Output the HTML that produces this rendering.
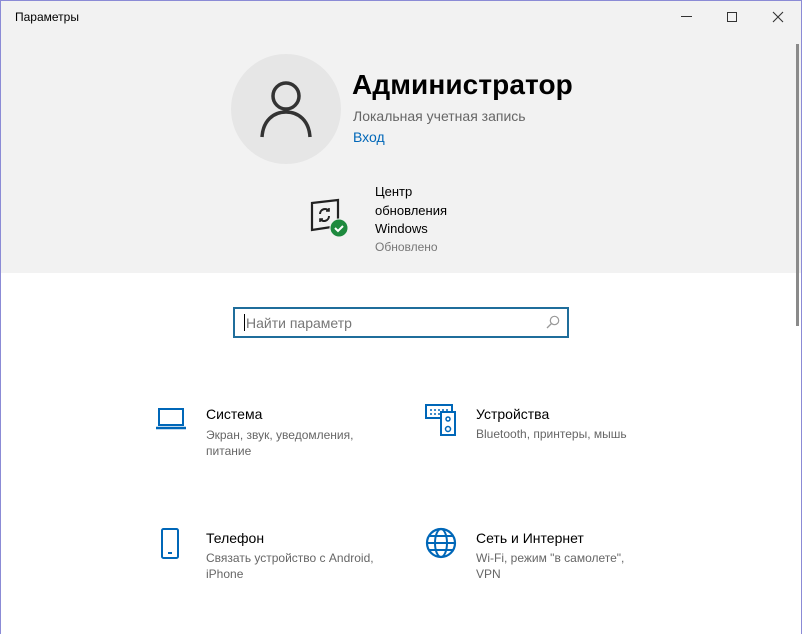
<!DOCTYPE html>
<html><head><meta charset="utf-8"><style>
*{margin:0;padding:0;box-sizing:border-box}
body{width:802px;height:634px;overflow:hidden;font-family:"Liberation Sans","DejaVu Sans",sans-serif;background:#fff;position:relative}
.win{position:absolute;left:0;top:0;width:802px;height:634px;border:1px solid #8b8bd6;border-bottom:none}
.head{position:absolute;left:1px;top:1px;width:800px;height:272px;background:#f2f2f2}
.t{position:absolute;white-space:nowrap}
.sb{position:absolute;left:796px;top:44px;width:3px;height:282px;background:#8a8a8a}
.ic{position:absolute}
</style></head><body>
<div class="win"></div>
<div class="head"></div>
<div class="t" style="left:15px;top:10px;font-size:12px;color:#000">Параметры</div>
<div class="t" style="left:681px;top:16px;width:11px;height:1px;background:#333"></div>
<div class="t" style="left:727px;top:12px;width:10px;height:10px;border:1px solid #333"></div>
<svg class="ic" style="left:772px;top:11px" width="12" height="12"><path d="M1 1L11 11M11 1L1 11" stroke="#333" stroke-width="1.1"/></svg>
<div class="sb"></div>

<div class="ic" style="left:231px;top:54px;width:110px;height:110px;border-radius:50%;background:#e6e6e6"></div>
<svg class="ic" style="left:259px;top:79px" width="54" height="60"><circle cx="27" cy="17" r="13" fill="none" stroke="#333" stroke-width="3.5"/><path d="M3 58C4 42 14 33 27 33S50 42 51 58" fill="none" stroke="#333" stroke-width="3.5"/></svg>
<div class="t" style="left:352px;top:69px;font-size:28px;font-weight:bold;color:#000;letter-spacing:0.1px">Администратор</div>
<div class="t" style="left:353px;top:108px;font-size:14px;color:#666">Локальная учетная запись</div>
<div class="t" style="left:353px;top:129px;font-size:14px;color:#0067b8">Вход</div>

<svg class="ic" style="left:308px;top:196px" width="44" height="44"><path d="M4 7L30 4V30L4 34Z" fill="none" stroke="#222" stroke-width="2.2"/><path d="M12 18a5 5 0 0 1 9-3M21 20a5 5 0 0 1-9 3" fill="none" stroke="#222" stroke-width="2"/><path d="M21 12v3h-3M12 26v-3h3" fill="none" stroke="#222" stroke-width="1.6"/><circle cx="31" cy="32" r="9" fill="#1e8a3e" stroke="#f2f2f2" stroke-width="1"/><path d="M27 32l3 3 5-5" fill="none" stroke="#fff" stroke-width="2"/></svg>
<div class="t" style="left:375px;top:183px;font-size:13px;color:#000;line-height:18.5px">Центр<br>обновления<br>Windows</div>
<div class="t" style="left:375px;top:240px;font-size:12px;color:#777">Обновлено</div>

<div class="ic" style="left:233px;top:307px;width:336px;height:31px;border:2px solid #1f6d9b;background:#fff"></div>
<div class="ic" style="left:244px;top:314px;width:1px;height:17px;background:#000"></div>
<div class="t" style="left:246px;top:315px;font-size:14px;color:#777">Найти параметр</div>
<svg class="ic" style="left:546px;top:315px" width="14" height="14"><circle cx="8.5" cy="5.5" r="4.2" fill="none" stroke="#999" stroke-width="1.2"/><path d="M5.5 8.5L1 13" stroke="#999" stroke-width="1.3"/></svg>

<svg class="ic" style="left:155px;top:407px" width="32" height="26"><rect x="4" y="2" width="24" height="16" fill="none" stroke="#0067b8" stroke-width="2"/><path d="M1 21H31" stroke="#0067b8" stroke-width="2.5"/></svg>
<div class="t" style="left:206px;top:406px;font-size:14px;color:#000">Система</div>
<div class="t" style="left:206px;top:427px;font-size:12px;color:#666;line-height:16px">Экран, звук, уведомления,<br>питание</div>

<svg class="ic" style="left:425px;top:403px" width="34" height="34"><rect x="1" y="2" width="26" height="13" fill="none" stroke="#0067b8" stroke-width="2"/><path d="M5 7h2M9 7h2M13 7h2M17 7h2M21 7h2M5 11h2M9 11h2M13 11h2" stroke="#0067b8" stroke-width="1.5"/><rect x="16" y="9" width="14" height="23" fill="#fff" stroke="#0067b8" stroke-width="2"/><circle cx="23" cy="16" r="2" fill="none" stroke="#0067b8" stroke-width="1.5"/><circle cx="23" cy="26" r="2.5" fill="none" stroke="#0067b8" stroke-width="1.5"/></svg>
<div class="t" style="left:476px;top:406px;font-size:14px;color:#000">Устройства</div>
<div class="t" style="left:476px;top:427px;font-size:12px;color:#666">Bluetooth, принтеры, мышь</div>

<svg class="ic" style="left:159px;top:527px" width="24" height="34"><rect x="3" y="2" width="16" height="29" rx="1.5" fill="none" stroke="#0067b8" stroke-width="2"/><path d="M9 26h4" stroke="#0067b8" stroke-width="2"/></svg>
<div class="t" style="left:206px;top:530px;font-size:14px;color:#000">Телефон</div>
<div class="t" style="left:206px;top:550px;font-size:12px;color:#666;line-height:16px">Связать устройство с Android,<br>iPhone</div>

<svg class="ic" style="left:425px;top:527px" width="32" height="32"><circle cx="16" cy="16" r="14" fill="none" stroke="#0067b8" stroke-width="2.2"/><ellipse cx="16" cy="16" rx="6" ry="14" fill="none" stroke="#0067b8" stroke-width="2"/><path d="M2 16H30M4 9H28M4 23H28" stroke="#0067b8" stroke-width="2"/></svg>
<div class="t" style="left:476px;top:530px;font-size:14px;color:#000">Сеть и Интернет</div>
<div class="t" style="left:476px;top:550px;font-size:12px;color:#666;line-height:16px">Wi-Fi, режим "в самолете",<br>VPN</div>
</body></html>
